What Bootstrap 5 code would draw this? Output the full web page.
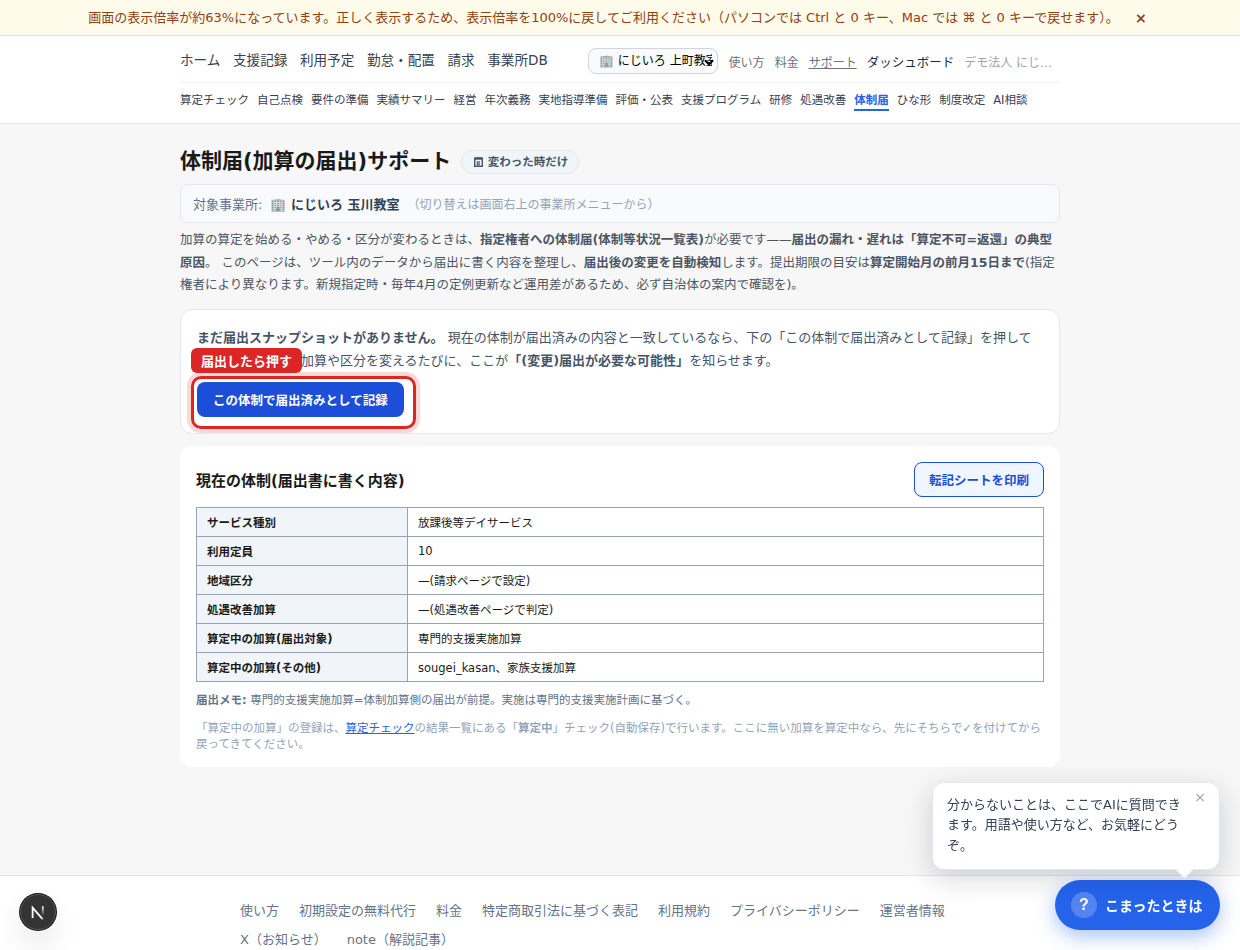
<!DOCTYPE html>
<html lang="ja">
<head>
<meta charset="utf-8">
<meta name="viewport" content="width=device-width, initial-scale=1">
<title>体制届サポート</title>
<link href="https://cdn.jsdelivr.net/npm/bootstrap@5.3.0/dist/css/bootstrap.min.css" rel="stylesheet">
<style>
body{font-family:"DejaVu Sans","Noto Sans CJK JP",sans-serif;font-size:13px;line-height:1.5;color:#1a1a1a;background:#f7f7f7;height:100vh;overflow:hidden}
a{text-decoration:none;color:inherit}
.wrap{width:880px;margin:0 auto}
.zoom-bar{height:36px;background:#fffbeb;border-bottom:1px solid #fde68a;color:#92400e;padding-right:5px}
.zoom-bar span{padding-top:1px}
.zoom-bar button{color:#92400e;font-size:14px;font-weight:600;line-height:1;margin-left:16px;width:12px}
.top{height:88px;background:#fff;border-bottom:1px solid #e5e5e5}
.row-main{height:47px;border-bottom:1px solid #f3f4f6}
.nav-main{gap:12.6px;font-size:13.6px;color:#374151;padding-top:2px}
.nav-side{gap:10px;font-size:12px;color:#6b7280;padding-top:8px;padding-right:8px}
.office{appearance:none;width:130px;height:26px;font-size:12px;border:1px solid #d1d5db;border-radius:8px;background:#f8fafc url("data:image/svg+xml,%3Csvg xmlns='http://www.w3.org/2000/svg' width='10' height='7' fill='none' stroke='%23000' stroke-width='2.2'%3E%3Cpath d='M1 1.2 5 5.2 9 1.2'/%3E%3C/svg%3E") no-repeat right 3px top 10px;color:#000;padding:1px 5px 0 10px;margin-top:3px}
.nav-sub{gap:8px;font-size:11.5px;color:#374151;padding-top:8px}
.nav-sub a{line-height:18px;height:20px}
.nav-sub .on{color:#2563eb;font-weight:700;border-bottom:2px solid #2563eb}
h1{font-size:21px;font-weight:700;line-height:32px}
.freq{height:24px;font-size:11.5px;font-weight:700;color:#475569;background:#f1f5f9;border:1px solid #e2e8f0;padding:0 9.5px 0 11.5px;margin-top:2px;gap:5px}
.freq span{padding-top:2px}
.target{height:39px;background:#f8fafc;border:1px solid #e2e8f0;border-radius:8px;padding:2px 12px 0;color:#64748b}
.lead-in{font-size:12.5px;line-height:22.5px;color:#4b5563;margin:6px 0 12px}
.status{height:125px;background:#fff;border:1px solid #e2e8f0;border-radius:12px;padding:16px;color:#475569}
.status p{line-height:23.4px;margin-bottom:10px}
.btn-rec{height:35px;font-size:12.5px;font-weight:700;line-height:19px;background:#1d4ed8;color:#fff;border:0;border-radius:8px;padding:9px 16px 7px}
.ring{left:-6px;top:-6px;width:225px;height:53px;border:3px solid #dc2626;border-radius:10px;box-shadow:0 0 0 4px rgba(220,38,38,.18)}
.tip{left:-6px;top:-34px;height:25px;line-height:28px;background:#dc2626;color:#fff;font-weight:700;border-radius:6px;padding:0 10px;white-space:nowrap}
.sheet{height:321px;background:#fff;border-radius:12px;padding:16px;margin-top:12px}
h2{font-size:15px;font-weight:700}
.btn-print{height:35px;font-size:12.5px;font-weight:700;line-height:19px;background:#eff6ff;color:#1d4ed8;border:1px solid #1d4ed8;border-radius:8px;padding:8px 14px 6px}
.grid{width:848px;border-collapse:collapse;font-size:11.5px;margin-top:10px;table-layout:fixed}
.grid th,.grid td{border:1px solid #94a3b8;height:29px;padding:3px 10px 0;line-height:17px}
.grid .num{padding-top:1px}
.grid th{width:211px;background:#f1f5f9}
.memo{font-size:11.5px;line-height:17px;color:#64748b;margin:10px 0 11px}
.hint{font-size:11.5px;line-height:16.1px;color:#94a3b8}
.foot{height:120px;margin-top:108px;background:#fff;border-top:1px solid #e5e5e5}
.foot-in{width:760px;margin:0 auto;padding-top:25px;column-gap:20px;row-gap:9px;color:#64748b;line-height:20px}
.bubble{right:20px;top:782px;width:288px;height:88px;background:#fff;border:1px solid #e2e8f0;border-radius:12px;box-shadow:0 8px 28px rgba(15,23,42,.18);padding:11.5px 36px 0 14px;line-height:20.8px;color:#334155}
.bubble:after{content:"";position:absolute;right:28px;bottom:-7px;width:13px;height:13px;background:#fff;border-right:1px solid #e2e8f0;border-bottom:1px solid #e2e8f0;transform:rotate(45deg)}
.bubble button{right:13px;top:7px;color:#94a3b8;font-size:14px;line-height:15px}
.help{right:20px;top:880px;width:165px;height:50px;border-radius:25px;background:#2563eb;color:#fff;font-size:14px;font-weight:700;box-shadow:0 6px 20px rgba(37,99,235,.4);padding-left:16px;gap:8px}
.help i{width:26px;height:26px;background:rgba(255,255,255,.22);font:700 16px "Liberation Sans",sans-serif}
.help span{padding-top:2px}
.dev{left:19px;top:893px;width:38px;height:38px;border-radius:50%;box-shadow:0 16px 32px -8px rgba(0,0,0,.24)}
</style>
</head>
<body>
<div class="zoom-bar d-flex align-items-center justify-content-center"><span>画面の表示倍率が約63%になっています。正しく表示するため、表示倍率を100%に戻してご利用ください（パソコンでは Ctrl と 0 キー、Mac では ⌘ と 0 キーで戻せます）。</span><button class="border-0 bg-transparent p-0">×</button></div>
<header class="top">
 <div class="wrap">
  <div class="row-main d-flex align-items-center justify-content-between">
   <nav class="nav-main d-flex"><a href="#">ホーム</a><a href="#">支援記録</a><a href="#">利用予定</a><a href="#">勤怠・配置</a><a href="#">請求</a><a href="#">事業所DB</a></nav>
   <div class="d-flex align-items-center" style="gap:10.6px">
    <select class="office"><option>🏢 にじいろ 上町教室</option></select>
    <div class="nav-side d-flex align-items-baseline"><a href="#">使い方</a><a href="#">料金</a><a href="#" class="text-decoration-underline">サポート</a><a href="#" style="font-size:12.5px;color:#1f2937">ダッシュボード</a><span style="color:#9ca3af">デモ法人 にじ…</span></div>
   </div>
  </div>
  <nav class="nav-sub d-flex"><a href="#">算定チェック</a><a href="#">自己点検</a><a href="#">要件の準備</a><a href="#">実績サマリー</a><a href="#">経営</a><a href="#">年次義務</a><a href="#">実地指導準備</a><a href="#">評価・公表</a><a href="#">支援プログラム</a><a href="#">研修</a><a href="#">処遇改善</a><a href="#" class="on">体制届</a><a href="#">ひな形</a><a href="#">制度改定</a><a href="#">AI相談</a></nav>
 </div>
</header>
<main class="wrap">
 <div class="d-flex align-items-center" style="gap:10px;padding-top:14px;height:60px"><h1 class="m-0">体制届(加算の届出)サポート</h1><span class="freq rounded-pill d-flex align-items-center"><svg width="9" height="10" viewBox="0 0 9 10" fill="none" stroke="#475569"><path d="M.7 1.5h7.6v7.8H.7z" stroke-width="1.4"/><path d="M.7 1.4h7.6" stroke-width="2.4"/><path d="M3.3 4.7h1.9v3.1H3.3z" stroke-width="1.1"/></svg><span>変わった時だけ</span></span></div>
 <div class="target d-flex align-items-center"><span>対象事業所:</span><strong class="ms-2" style="color:#334155">🏢 にじいろ 玉川教室</strong><span style="font-size:12px;color:#94a3b8;margin-left:8px">（切り替えは画面右上の事業所メニューから）</span></div>
 <p class="lead-in">加算の算定を始める・やめる・区分が変わるときは、<strong>指定権者への体制届(体制等状況一覧表)</strong>が必要です——<strong>届出の漏れ・遅れは「算定不可=返還」の典型原因</strong>。 このページは、ツール内のデータから届出に書く内容を整理し、<strong>届出後の変更を自動検知</strong>します。提出期限の目安は<strong>算定開始月の前月15日まで</strong>(指定権者により異なります。新規指定時・毎年4月の定例更新など運用差があるため、必ず自治体の案内で確認を)。</p>
 <section class="status">
  <p><strong>まだ届出スナップショットがありません。</strong> 現在の体制が届出済みの内容と一致しているなら、下の「この体制で届出済みとして記録」を押してください。以後、加算や区分を変えるたびに、ここが<strong>「(変更)届出が必要な可能性」</strong>を知らせます。</p>
  <div class="position-relative"><button class="btn btn-rec">この体制で届出済みとして記録</button><span class="ring position-absolute"></span><span class="tip position-absolute">届出したら押す</span></div>
 </section>
 <section class="sheet">
  <div class="d-flex align-items-center justify-content-between"><h2 class="m-0 pt-1">現在の体制(届出書に書く内容)</h2><button class="btn btn-print">転記シートを印刷</button></div>
  <table class="grid">
   <tr><th>サービス種別</th><td>放課後等デイサービス</td></tr>
   <tr><th>利用定員</th><td class="num">10</td></tr>
   <tr><th>地域区分</th><td>—(請求ページで設定)</td></tr>
   <tr><th>処遇改善加算</th><td>—(処遇改善ページで判定)</td></tr>
   <tr><th>算定中の加算(届出対象)</th><td>専門的支援実施加算</td></tr>
   <tr><th>算定中の加算(その他)</th><td>sougei_kasan、家族支援加算</td></tr>
  </table>
  <p class="memo"><strong>届出メモ:</strong> 専門的支援実施加算=体制加算側の届出が前提。実施は専門的支援実施計画に基づく。</p>
  <p class="hint m-0">「算定中の加算」の登録は、<a href="#" class="text-decoration-underline" style="color:#2563eb">算定チェック</a>の結果一覧にある「<strong>算定中</strong>」チェック(自動保存)で行います。ここに無い加算を算定中なら、先にそちらで✓を付けてから戻ってきてください。</p>
 </section>
</main>
<footer class="foot"><div class="foot-in d-flex flex-wrap"><a href="#">使い方</a><a href="#">初期設定の無料代行</a><a href="#">料金</a><a href="#">特定商取引法に基づく表記</a><a href="#">利用規約</a><a href="#">プライバシーポリシー</a><a href="#">運営者情報</a><a href="#">X（お知らせ）</a><a href="#">note（解説記事）</a></div></footer>
<button class="help position-fixed border-0 d-flex align-items-center"><i class="rounded-circle d-flex align-items-center justify-content-center">?</i><span>こまったときは</span></button>
<div class="bubble position-fixed">分からないことは、ここでAIに質問できます。用語や使い方など、お気軽にどうぞ。<button class="position-absolute border-0 bg-transparent p-0">×</button></div>
<div class="dev position-fixed"><svg class="d-block" width="38" height="38" viewBox="0 0 38 38" fill="none"><defs><linearGradient id="g1" x1="19" y1="20" x2="25" y2="27" gradientUnits="userSpaceOnUse"><stop stop-color="#fff"/><stop offset=".6" stop-color="#fff"/><stop offset="1" stop-color="#fff" stop-opacity=".3"/></linearGradient><linearGradient id="g2" x1="24" y1="13" x2="24" y2="23" gradientUnits="userSpaceOnUse"><stop stop-color="#fff"/><stop offset="1" stop-color="#fff" stop-opacity="0"/></linearGradient></defs><circle cx="19" cy="19" r="19" fill="#171717"/><circle cx="19" cy="19" r="17.5" fill="#333" stroke="#5a5a5a"/><path d="M13.6 25V14.6L23.8 26.3" stroke="url(#g1)" stroke-width="1.8"/><path d="M23.8 13.3V22.5" stroke="url(#g2)" stroke-width="1.8"/></svg></div>
<script src="https://cdn.jsdelivr.net/npm/bootstrap@5.3.0/dist/js/bootstrap.bundle.min.js"></script>
</body>
</html>
